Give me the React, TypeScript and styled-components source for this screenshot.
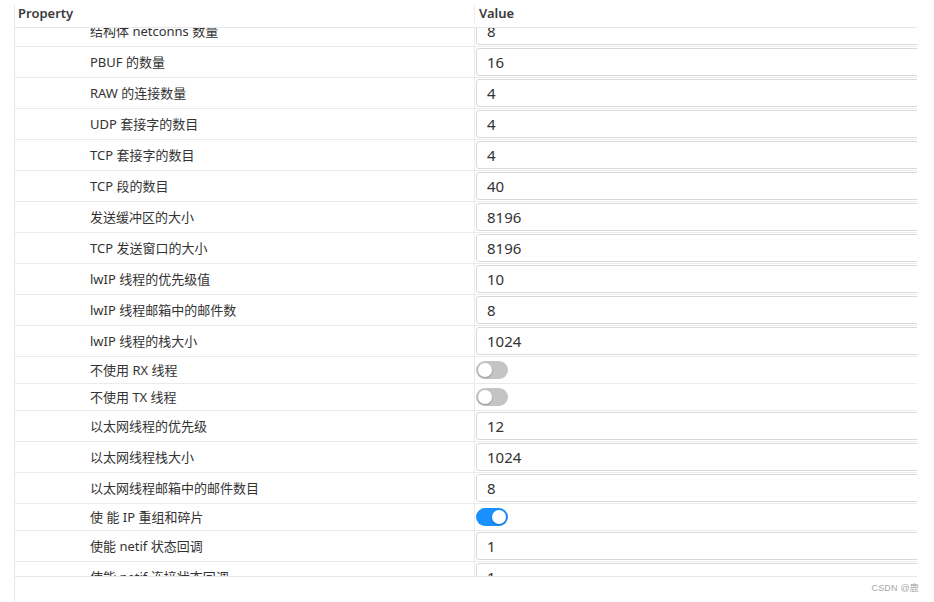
import React from "react";
import styled, { createGlobalStyle } from "styled-components";

const Global = createGlobalStyle`
  html, body { margin: 0; padding: 0; background: #fff; }
  body {
    font-family: "Noto Sans", "Noto Sans CJK SC", sans-serif;
    color: #333;
    overflow: hidden;
  }
`;

const Page = styled.div`
  position: relative;
  width: 934px;
  height: 602px;
  overflow: hidden;
  padding: 5px 0 0 14px;
  box-sizing: border-box;
`;

const Frame = styled.div`
  width: 903px;
  height: 620px;
  border-left: 1px solid #e6e6e6;
  box-sizing: border-box;
  overflow: hidden;
`;

const Header = styled.div`
  display: flex;
  height: 23px;
  border-bottom: 1px solid #e8e8e8;
  box-sizing: border-box;
`;

const HeaderCell = styled.div<{ $first?: boolean }>`
  flex: ${(p) => (p.$first ? "0 0 460px" : "1 1 auto")};
  box-sizing: border-box;
  padding-left: ${(p) => (p.$first ? "3px" : "4px")};
  border-right: ${(p) => (p.$first ? "1px solid #ececec" : "none")};
  font-size: 13px;
  font-weight: 600;
  line-height: 17px;
  color: #3a3a3a;
  height: 18px;
`;

const Body = styled.div`
  height: 549px;
  border-bottom: 1px solid #e8e8e8;
  box-sizing: border-box;
  overflow: hidden;
`;

const List = styled.div`
  margin-top: -12px;
  display: flex;
  flex-direction: column;
`;

const Row = styled.div<{ $toggle?: boolean }>`
  display: flex;
  height: ${(p) => (p.$toggle ? "27px" : "31px")};
  border-bottom: 1px solid #ebebeb;
  box-sizing: border-box;
`;

const NameCell = styled.div`
  flex: 0 0 460px;
  box-sizing: border-box;
  border-right: 1px solid #ececec;
  padding: 0 0 2px 75px;
  display: flex;
  align-items: center;
  font-size: 13px;
  color: #333;
  white-space: nowrap;
`;

const ValueCell = styled.div`
  flex: 0 0 520px;
  box-sizing: border-box;
  padding-left: 1px;
  display: flex;
  align-items: center;
`;

const Input = styled.input`
  width: 500px;
  height: 28px;
  box-sizing: border-box;
  border: 1px solid #d9d9d9;
  border-radius: 3px;
  padding: 0 10px;
  font-family: "Noto Sans", "Noto Sans CJK SC", sans-serif;
  font-size: 15px;
  color: #333;
  background: #fff;
  outline: none;
`;

const Switch = styled.button<{ $on?: boolean }>`
  position: relative;
  width: 32px;
  height: 18px;
  margin: 0;
  padding: 0;
  border: none;
  border-radius: 9px;
  background: ${(p) => (p.$on ? "#1890ff" : "#c4c4c4")};
  cursor: pointer;

  &::after {
    content: "";
    position: absolute;
    top: 2px;
    left: ${(p) => (p.$on ? "16px" : "2px")};
    width: 14px;
    height: 14px;
    border-radius: 50%;
    background: #fff;
    box-shadow: 0 1px 2px rgba(0, 0, 0, 0.25);
  }
`;

const Watermark = styled.div`
  position: absolute;
  right: 15px;
  bottom: 8px;
  font-family: "Liberation Sans", "Noto Sans CJK SC", sans-serif;
  font-size: 9px;
  color: #a8a8a8;
  letter-spacing: 0.2px;
`;

type Item =
  | { name: string; kind: "input"; value: string }
  | { name: string; kind: "switch"; on: boolean };

const items: Item[] = [
  { name: "结构体 netconns 数量", kind: "input", value: "8" },
  { name: "PBUF 的数量", kind: "input", value: "16" },
  { name: "RAW 的连接数量", kind: "input", value: "4" },
  { name: "UDP 套接字的数目", kind: "input", value: "4" },
  { name: "TCP 套接字的数目", kind: "input", value: "4" },
  { name: "TCP 段的数目", kind: "input", value: "40" },
  { name: "发送缓冲区的大小", kind: "input", value: "8196" },
  { name: "TCP 发送窗口的大小", kind: "input", value: "8196" },
  { name: "lwIP 线程的优先级值", kind: "input", value: "10" },
  { name: "lwIP 线程邮箱中的邮件数", kind: "input", value: "8" },
  { name: "lwIP 线程的栈大小", kind: "input", value: "1024" },
  { name: "不使用 RX 线程", kind: "switch", on: false },
  { name: "不使用 TX 线程", kind: "switch", on: false },
  { name: "以太网线程的优先级", kind: "input", value: "12" },
  { name: "以太网线程栈大小", kind: "input", value: "1024" },
  { name: "以太网线程邮箱中的邮件数目", kind: "input", value: "8" },
  { name: "使 能 IP 重组和碎片", kind: "switch", on: true },
  { name: "使能 netif 状态回调", kind: "input", value: "1" },
  { name: "使能 netif 连接状态回调", kind: "input", value: "1" },
];

export default function App() {
  return (
    <>
      <Global />
      <Page>
        <Frame>
          <Header>
            <HeaderCell $first>Property</HeaderCell>
            <HeaderCell>Value</HeaderCell>
          </Header>
          <Body>
            <List>
              {items.map((it, i) => (
                <Row key={i} $toggle={it.kind === "switch"}>
                  <NameCell>{it.name}</NameCell>
                  <ValueCell>
                    {it.kind === "input" ? (
                      <Input readOnly value={it.value} />
                    ) : (
                      <Switch role="switch" aria-checked={it.on} $on={it.on} />
                    )}
                  </ValueCell>
                </Row>
              ))}
            </List>
          </Body>
        </Frame>
        <Watermark>CSDN @鹿</Watermark>
      </Page>
    </>
  );
}
